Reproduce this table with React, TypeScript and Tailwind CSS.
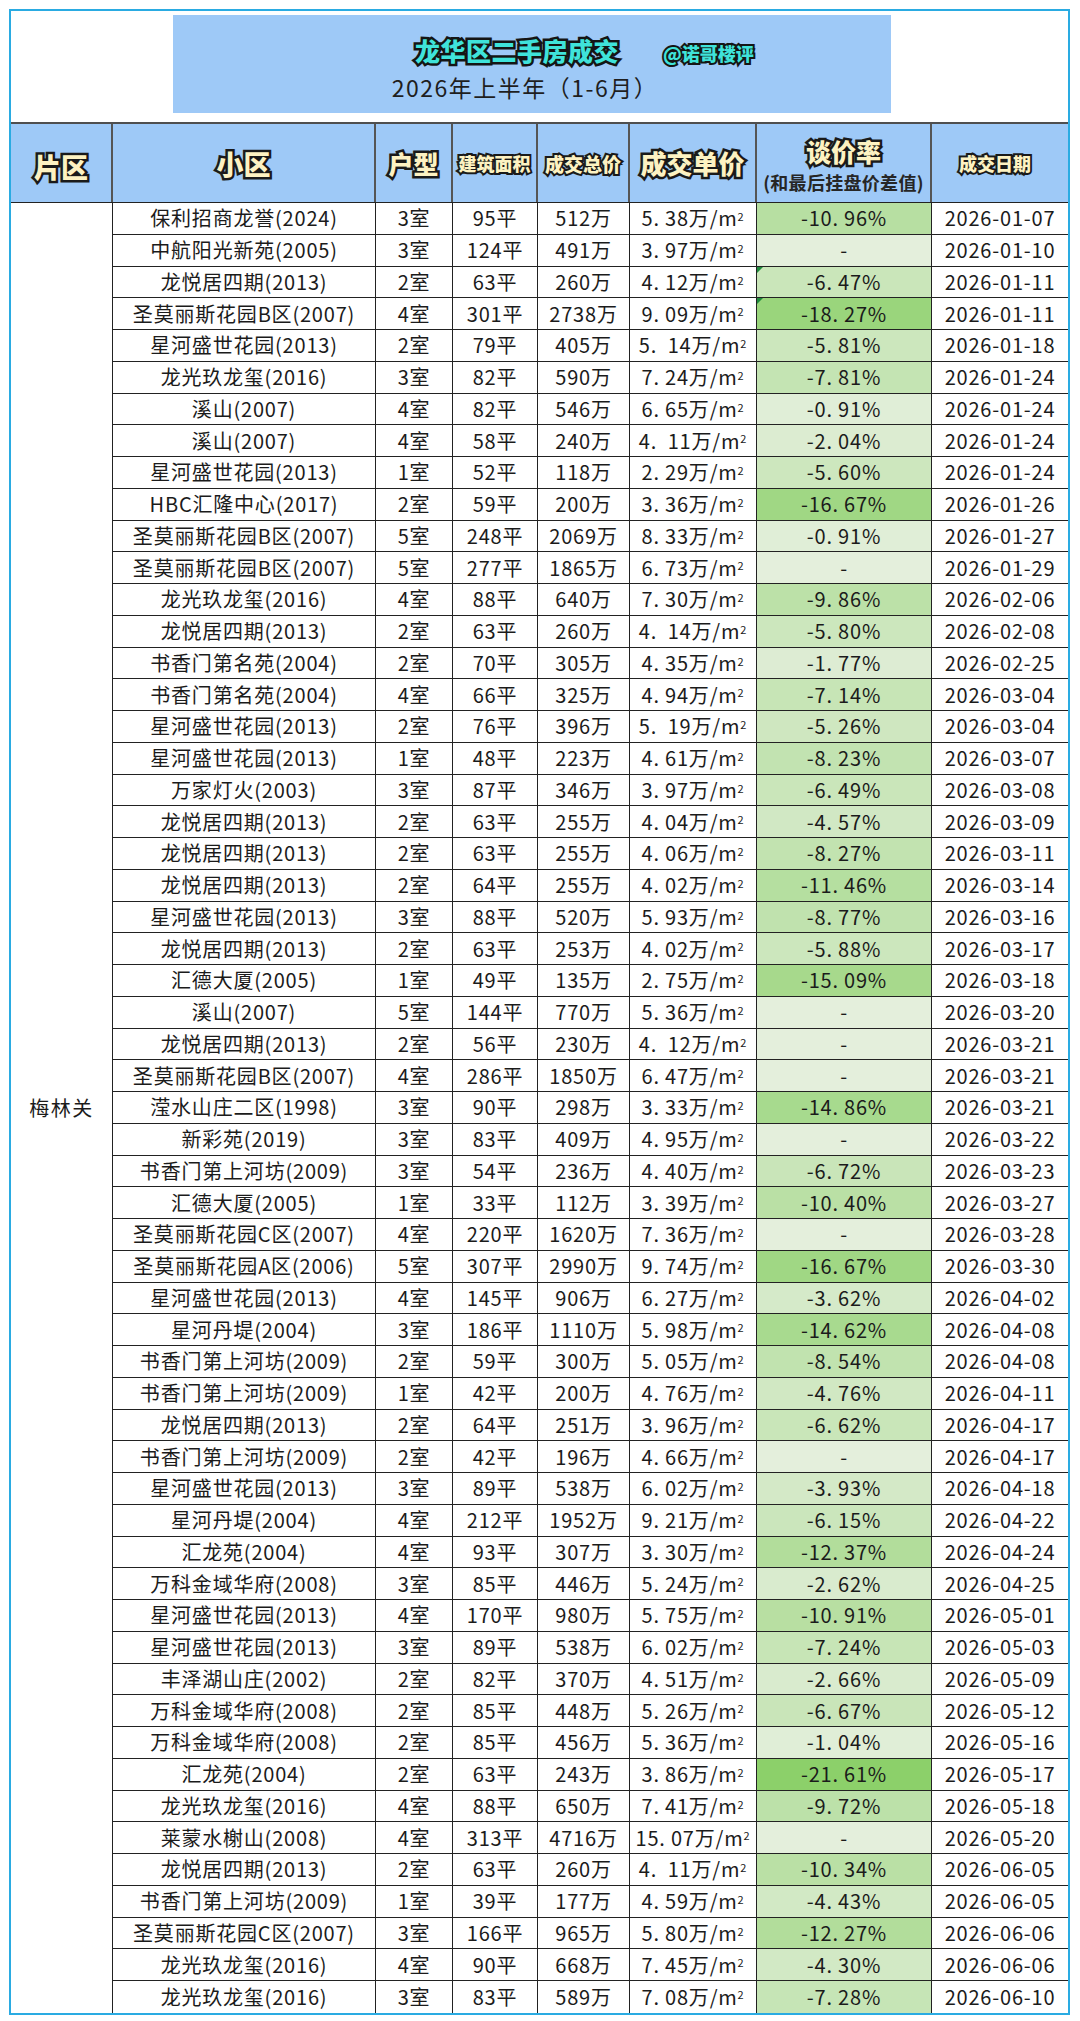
const data = `保利招商龙誉(2024)|3室|95平|512万|5. 38|-10.96|2026-01-07
中航阳光新苑(2005)|3室|124平|491万|3. 97|-|2026-01-10
龙悦居四期(2013)|2室|63平|260万|4. 12|-6.47|2026-01-11|t
圣莫丽斯花园B区(2007)|4室|301平|2738万|9. 09|-18.27|2026-01-11|t
星河盛世花园(2013)|2室|79平|405万|5.  14|-5.81|2026-01-18
龙光玖龙玺(2016)|3室|82平|590万|7. 24|-7.81|2026-01-24
溪山(2007)|4室|82平|546万|6. 65|-0.91|2026-01-24
溪山(2007)|4室|58平|240万|4.  11|-2.04|2026-01-24
星河盛世花园(2013)|1室|52平|118万|2. 29|-5.60|2026-01-24
HBC汇隆中心(2017)|2室|59平|200万|3. 36|-16.67|2026-01-26
圣莫丽斯花园B区(2007)|5室|248平|2069万|8. 33|-0.91|2026-01-27
圣莫丽斯花园B区(2007)|5室|277平|1865万|6. 73|-|2026-01-29
龙光玖龙玺(2016)|4室|88平|640万|7. 30|-9.86|2026-02-06
龙悦居四期(2013)|2室|63平|260万|4.  14|-5.80|2026-02-08
书香门第名苑(2004)|2室|70平|305万|4. 35|-1.77|2026-02-25
书香门第名苑(2004)|4室|66平|325万|4. 94|-7.14|2026-03-04
星河盛世花园(2013)|2室|76平|396万|5.  19|-5.26|2026-03-04
星河盛世花园(2013)|1室|48平|223万|4. 61|-8.23|2026-03-07
万家灯火(2003)|3室|87平|346万|3. 97|-6.49|2026-03-08
龙悦居四期(2013)|2室|63平|255万|4. 04|-4.57|2026-03-09
龙悦居四期(2013)|2室|63平|255万|4. 06|-8.27|2026-03-11
龙悦居四期(2013)|2室|64平|255万|4. 02|-11.46|2026-03-14
星河盛世花园(2013)|3室|88平|520万|5. 93|-8.77|2026-03-16
龙悦居四期(2013)|2室|63平|253万|4. 02|-5.88|2026-03-17
汇德大厦(2005)|1室|49平|135万|2. 75|-15.09|2026-03-18
溪山(2007)|5室|144平|770万|5. 36|-|2026-03-20
龙悦居四期(2013)|2室|56平|230万|4.  12|-|2026-03-21
圣莫丽斯花园B区(2007)|4室|286平|1850万|6. 47|-|2026-03-21
滢水山庄二区(1998)|3室|90平|298万|3. 33|-14.86|2026-03-21
新彩苑(2019)|3室|83平|409万|4. 95|-|2026-03-22
书香门第上河坊(2009)|3室|54平|236万|4. 40|-6.72|2026-03-23
汇德大厦(2005)|1室|33平|112万|3. 39|-10.40|2026-03-27
圣莫丽斯花园C区(2007)|4室|220平|1620万|7. 36|-|2026-03-28
圣莫丽斯花园A区(2006)|5室|307平|2990万|9. 74|-16.67|2026-03-30
星河盛世花园(2013)|4室|145平|906万|6. 27|-3.62|2026-04-02
星河丹堤(2004)|3室|186平|1110万|5. 98|-14.62|2026-04-08
书香门第上河坊(2009)|2室|59平|300万|5. 05|-8.54|2026-04-08
书香门第上河坊(2009)|1室|42平|200万|4. 76|-4.76|2026-04-11
龙悦居四期(2013)|2室|64平|251万|3. 96|-6.62|2026-04-17
书香门第上河坊(2009)|2室|42平|196万|4. 66|-|2026-04-17
星河盛世花园(2013)|3室|89平|538万|6. 02|-3.93|2026-04-18
星河丹堤(2004)|4室|212平|1952万|9. 21|-6.15|2026-04-22
汇龙苑(2004)|4室|93平|307万|3. 30|-12.37|2026-04-24
万科金域华府(2008)|3室|85平|446万|5. 24|-2.62|2026-04-25
星河盛世花园(2013)|4室|170平|980万|5. 75|-10.91|2026-05-01
星河盛世花园(2013)|3室|89平|538万|6. 02|-7.24|2026-05-03
丰泽湖山庄(2002)|2室|82平|370万|4. 51|-2.66|2026-05-09
万科金域华府(2008)|2室|85平|448万|5. 26|-6.67|2026-05-12
万科金域华府(2008)|2室|85平|456万|5. 36|-1.04|2026-05-16
汇龙苑(2004)|2室|63平|243万|3. 86|-21.61|2026-05-17
龙光玖龙玺(2016)|4室|88平|650万|7. 41|-9.72|2026-05-18
莱蒙水榭山(2008)|4室|313平|4716万|15. 07|-|2026-05-20
龙悦居四期(2013)|2室|63平|260万|4.  11|-10.34|2026-06-05
书香门第上河坊(2009)|1室|39平|177万|4. 59|-4.43|2026-06-05
圣莫丽斯花园C区(2007)|3室|166平|965万|5. 80|-12.27|2026-06-06
龙光玖龙玺(2016)|4室|90平|668万|7. 45|-4.30|2026-06-06
龙光玖龙玺(2016)|3室|83平|589万|7. 08|-7.28|2026-06-10`
  .split('\n')
  .map(l => l.split('|'))

// light -> strong green, by size of the discount
const green = (r: string) => {
  const v = r === '-' ? 0 : Math.abs(parseFloat(r))
  const t = Math.min(v / 21.61, 1)
  const c0 = [228, 239, 220]
  const c1 = [140, 208, 106]
  return `rgb(${c0.map((a, i) => Math.round(a + (c1[i] - a) * t)).join(',')})`
}

const outline = "font-black text-[#fdf2c2] [-webkit-text-stroke:5px_#1a1a1a] [paint-order:stroke_fill] leading-none"
const outlineSm = "font-black text-[#fdf2c2] [-webkit-text-stroke:4px_#1a1a1a] [paint-order:stroke_fill] leading-none"
const cyan = "font-black text-[#3fe3da] [paint-order:stroke_fill] leading-none"

export default function App() {
  return (
    <div className="w-[1080px] h-[2021px] bg-white pt-[9px] pl-[9px] font-['Noto_Sans_CJK_SC','Noto_Sans',sans-serif] text-[#1b1b1b]">
      <div className="w-[1061px] border-2 border-[#2aabe2] bg-white">
        {/* title */}
        <div className="h-[111px] pt-[4px] pl-[162px]">
          <div className="w-[718px] h-[98px] bg-[#9ec9f7] flex flex-col">
            <div className="flex items-end pl-[242px] pt-[18px] h-[48px]">
              <span className={`${cyan} text-[25px] tracking-[0.5px] [-webkit-text-stroke:5px_#151515]`}>龙华区二手房成交</span>
              <span className={`${cyan} text-[18px] ml-[44px] mb-[1px] [-webkit-text-stroke:4px_#151515]`}>@诺哥楼评</span>
            </div>
            <div className="text-center text-[23px] leading-none mt-[13px] tracking-[1.5px] text-[#1e1e1e] pr-[14px]">2026年上半年（1-6月）</div>
          </div>
        </div>

        {/* header */}
        <div className="border-t-2 border-[#4f4f4f] border-b border-b-[#222] h-[81px] flex bg-[#9ec9f7]">
          <div className="w-[102px] border-r-2 border-[#555] flex items-center justify-center pt-[6px]">
            <span className={`${outline} text-[27px]`}>片区</span>
          </div>
          <div className="w-[263px] border-r-2 border-[#555] flex items-center justify-center">
            <span className={`${outline} text-[27px]`}>小区</span>
          </div>
          <div className="w-[77px] border-r-2 border-[#555] flex items-center justify-center">
            <span className={`${outline} text-[25px]`}>户型</span>
          </div>
          <div className="w-[85px] border-r-2 border-[#555] flex items-center justify-center">
            <span className={`${outlineSm} text-[18px]`}>建筑面积</span>
          </div>
          <div className="w-[92px] border-r-2 border-[#555] flex items-center justify-center">
            <span className={`${outlineSm} text-[19px]`}>成交总价</span>
          </div>
          <div className="w-[127px] border-r-2 border-[#555] flex items-center justify-center">
            <span className={`${outline} text-[26px]`}>成交单价</span>
          </div>
          <div className="w-[175px] border-r-2 border-[#555] flex flex-col items-center justify-center pt-[4px]">
            <span className={`${outline} text-[25px]`}>谈价率</span>
            <span className="font-bold text-[18px] leading-none mt-[9px] text-[#262626] tracking-[0.3px]">(和最后挂盘价差值)</span>
          </div>
          <div className="flex-1 flex items-center justify-center pr-[10px]">
            <span className={`${outlineSm} text-[18px]`}>成交日期</span>
          </div>
        </div>

        {/* body */}
        <div className="flex">
          <div className="w-[102px] border-r border-[#222] flex items-center justify-center">
            <span className="text-[20px] tracking-[1.5px]">梅林关</span>
          </div>
          <div className="flex-1">
            {data.map((r, i) => (
              <div key={i} className={`flex h-[31.75px] text-[20px] leading-none tracking-[0.8px] ${i < data.length - 1 ? 'border-b border-[#222]' : ''}`}>
                <div className="w-[263px] border-r border-[#222] flex items-center justify-center">{r[0]}</div>
                <div className="w-[77px] border-r border-[#222] flex items-center justify-center">{r[1]}</div>
                <div className="w-[85px] border-r border-[#222] flex items-center justify-center">{r[2]}</div>
                <div className="w-[92px] border-r border-[#222] flex items-center justify-center">{r[3]}</div>
                <div className="w-[127px] border-r border-[#222] flex items-center justify-center whitespace-pre">
                  {r[4]}万/m<span className="text-[11px] self-start mt-[8px]">2</span>
                </div>
                <div className="relative w-[175px] border-r border-[#222] flex items-center justify-center" style={{ background: green(r[5]) }}>
                  {r[7] && <span className="absolute left-0 top-0 w-0 h-0 border-t-[6px] border-r-[6px] border-t-[#1f8a3c] border-r-transparent" />}
                  {r[5] === '-' ? '-' : `${r[5].replace('.', '. ')}%`}
                </div>
                <div className="flex-1 flex items-center justify-center">{r[6]}</div>
              </div>
            ))}
          </div>
        </div>
      </div>
    </div>
  )
}
